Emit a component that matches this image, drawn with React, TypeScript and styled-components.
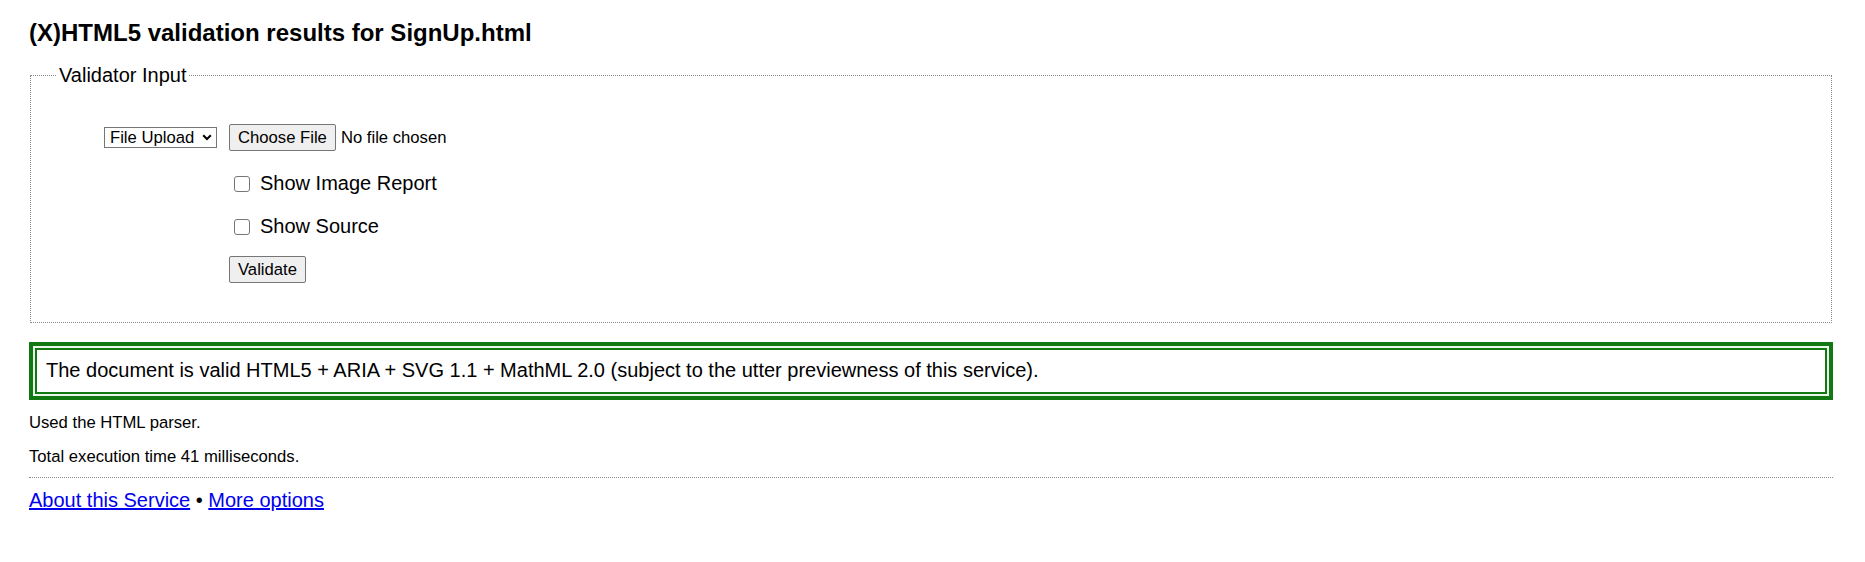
import React from 'react'
import styled, { createGlobalStyle } from 'styled-components'

const GlobalStyle = createGlobalStyle`
  body {
    margin: 0;
    background: #fff;
    color: #000;
    font-family: "Liberation Sans", Arial, sans-serif;
  }
`

const Page = styled.div`
  padding: 0 32px 30px 29px;
`

const Title = styled.h2`
  margin: 19px 0 0;
  font-size: 24px;
  line-height: 28px;
  font-weight: bold;
`

const InputFieldset = styled.fieldset`
  margin: 17px 1px 0;
  padding: 0 0 39px;
  border: 1px dotted #8a8a8a;
  min-width: 0;
`

const Legend = styled.legend`
  margin-left: 26px;
  padding: 0 2px;
  font-size: 20px;
  line-height: 23px;
`

interface FormRow {
  $top: number
}
const FormRow = styled.div<FormRow>`
  display: flex;
  align-items: center;
  margin-top: ${({ $top }) => $top}px;
`

const LabelCell = styled.div`
  display: flex;
  justify-content: flex-end;
  flex: 0 0 198px;
  box-sizing: border-box;
  padding-right: 12px;
`

const FieldCell = styled.div`
  display: flex;
  align-items: center;
`

const SelectWrap = styled.span`
  position: relative;
  display: inline-flex;
`

const Select = styled.select`
  appearance: none;
  width: 113px;
  height: 21px;
  margin: 0;
  padding: 0 20px 0 5px;
  border: 1px solid #767676;
  border-radius: 0;
  background: #fff;
  color: #000;
  font-family: inherit;
  font-size: 16.67px;
  line-height: 19px;
`

const Chevron = styled.svg`
  position: absolute;
  right: 5px;
  top: 7px;
  pointer-events: none;
`

const Button = styled.button`
  margin: 0;
  padding: 3px 8px;
  border: 1px solid #767676;
  border-radius: 2px;
  background: #efefef;
  color: #000;
  font-family: inherit;
  font-size: 16.67px;
  line-height: 19px;
`

const NoFile = styled.span`
  margin-left: 5px;
  font-size: 16.67px;
  line-height: 19px;
`

const CheckLabel = styled.label`
  display: flex;
  align-items: center;
  font-size: 20px;
  line-height: 23px;
`

const CheckBox = styled.input.attrs({ type: 'checkbox' })`
  appearance: none;
  width: 16px;
  height: 16px;
  margin: 0 10px 0 5px;
  border: 1px solid #767676;
  border-radius: 3px;
  background: #fff;
`

const SuccessBox = styled.p`
  margin: 19px 0 0;
  padding: 13px 13px 14px;
  border: 4px solid #127812;
  box-shadow: inset 0 0 0 2px #eaf6ea, inset 0 0 0 4px #127812;
  font-size: 20px;
  line-height: 23px;
`

interface Note {
  $top: number
}
const Note = styled.p<Note>`
  margin: ${({ $top }) => $top}px 0 0;
  font-size: 16.67px;
  line-height: 19px;
`

const Rule = styled.hr`
  margin: 11px 0 0;
  border: 0;
  border-top: 1px dotted #8a8a8a;
`

const FooterLinks = styled.p`
  margin: 11px 0 0;
  font-size: 20px;
  line-height: 23px;
`

const Link = styled.a`
  color: #0000ee;
  text-decoration: underline;
`

export default function App() {
  return (
    <Page>
      <GlobalStyle />
      <Title>(X)HTML5 validation results for SignUp.html</Title>
      <InputFieldset>
        <Legend>Validator Input</Legend>
        <FormRow $top={37}>
          <LabelCell>
            <SelectWrap>
              <Select defaultValue="file">
                <option value="address">Address</option>
                <option value="file">File Upload</option>
                <option value="text">Text Field</option>
              </Select>
              <Chevron width="10" height="7" viewBox="0 0 10 7">
                <path d="M1.2 1.2 L5 5 L8.8 1.2" fill="none" stroke="#000" strokeWidth="2" />
              </Chevron>
            </SelectWrap>
          </LabelCell>
          <FieldCell>
            <Button type="button">Choose File</Button>
            <NoFile>No file chosen</NoFile>
          </FieldCell>
        </FormRow>
        <FormRow $top={21}>
          <LabelCell />
          <CheckLabel>
            <CheckBox />
            Show Image Report
          </CheckLabel>
        </FormRow>
        <FormRow $top={20}>
          <LabelCell />
          <CheckLabel>
            <CheckBox />
            Show Source
          </CheckLabel>
        </FormRow>
        <FormRow $top={18}>
          <LabelCell />
          <Button type="button">Validate</Button>
        </FormRow>
      </InputFieldset>
      <SuccessBox>
        The document is valid HTML5 + ARIA + SVG 1.1 + MathML 2.0 (subject to the utter previewness of this service).
      </SuccessBox>
      <Note $top={13}>Used the HTML parser.</Note>
      <Note $top={15}>Total execution time 41 milliseconds.</Note>
      <Rule />
      <FooterLinks>
        <Link href="#about">About this Service</Link> • <Link href="#options">More options</Link>
      </FooterLinks>
    </Page>
  )
}
